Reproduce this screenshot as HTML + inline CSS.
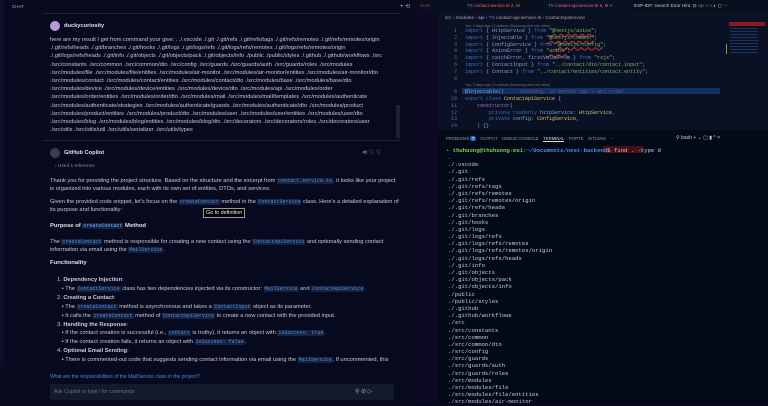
<!DOCTYPE html>
<html><head><meta charset="utf-8"><style>
*{margin:0;padding:0;box-sizing:border-box}
body{width:768px;height:404px;overflow:hidden;background:#070a1e;font-family:"Liberation Sans",sans-serif;position:relative}
.a{position:absolute}
.chat{left:0;top:0;width:414px;height:404px;background:#070a1e}
.strip{left:0;top:0;width:4px;height:404px;background:#0b0f2a}
.t{font-size:5.7px;color:#c9cbd6;white-space:nowrap}
.c{font-family:"Liberation Mono",monospace;color:#4d8fe0;background:#17223f;padding:0 1px;font-size:5px}
.m{font-family:"Liberation Mono",monospace;white-space:pre;font-size:5.6px}
.term div{height:7.2px;line-height:7.2px}
</style></head><body>
<div class="a chat"></div><div class="a strip"></div>
<div class="a t" style="left:12px;top:4px;color:#aaa;font-size:4.5px">CHAT</div>
<div class="a" style="left:42px;top:13px;width:358px;height:1px;background:#1b2138"></div>
<div class="a" style="left:50px;top:21px;width:10px;height:10px;border-radius:50%;background:#b89bd0"></div>
<div class="a t" style="left:64px;top:23px;font-weight:bold;color:#e0e0e8">duckycuriosity</div>
<div class="a t" style="left:50px;top:36px;line-height:8.2px;color:#c4c6d2">here are my result I get from command your give: . ./.vscode ./.git ./.git/refs ./.git/refs/tags ./.git/refs/remotes ./.git/refs/remotes/origin<br>./.git/refs/heads ./.git/branches ./.git/hooks ./.git/logs ./.git/logs/refs ./.git/logs/refs/remotes ./.git/logs/refs/remotes/origin<br>./.git/logs/refs/heads ./.git/info ./.git/objects ./.git/objects/pack ./.git/objects/info ./public ./public/styles ./.github ./.github/workflows ./src<br>./src/constants ./src/common ./src/common/dto ./src/config ./src/guards ./src/guards/auth ./src/guards/roles ./src/modules<br>./src/modules/file ./src/modules/file/entities ./src/modules/air-monitor ./src/modules/air-monitor/entities ./src/modules/air-monitor/dto<br>./src/modules/contact ./src/modules/contact/entities ./src/modules/contact/dto ./src/modules/base ./src/modules/base/dto<br>./src/modules/device ./src/modules/device/entities ./src/modules/device/dto ./src/modules/api ./src/modules/order<br>./src/modules/order/entities ./src/modules/order/dto ./src/modules/mail ./src/modules/mail/templates ./src/modules/authenticate<br>./src/modules/authenticate/strategies ./src/modules/authenticate/guards ./src/modules/authenticate/dto ./src/modules/product<br>./src/modules/product/entities ./src/modules/product/dto ./src/modules/user ./src/modules/user/entities ./src/modules/user/dto<br>./src/modules/blog ./src/modules/blog/entities ./src/modules/blog/dto ./src/decorators ./src/decorators/roles ./src/decorators/user<br>./src/utils ./src/utils/util ./src/utils/serializer ./src/utils/types</div>
<div class="a" style="left:42px;top:140px;width:358px;height:1px;background:#1b2138"></div>
<div class="a" style="left:50px;top:148px;width:10px;height:10px;border-radius:50%;background:#3a3d4e"></div>
<div class="a t" style="left:64px;top:150px;font-weight:bold;color:#e0e0e8">GitHub Copilot</div>
<div class="a t" style="left:362px;top:149px;color:#bbb;font-size:6px">⊲ ♡ ♡</div>
<div class="a t" style="left:55px;top:164px;color:#8a8ea0;font-size:4.8px">› Used 1 reference</div>
<div class="a t" style="left:50px;top:177px;line-height:8.3px">Thank you for providing the project structure. Based on the structure and the excerpt from <span class="c">contact.service.ts</span>, it looks like your project<br>is organized into various modules, each with its own set of entities, DTOs, and services.</div>
<div class="a t" style="left:50px;top:198px;line-height:8.3px">Given the provided code snippet, let's focus on the <span class="c">createContact</span> method in the <span class="c">ContactService</span> class. Here's a detailed explanation of<br>its purpose and functionality:</div>
<div class="a t" style="left:203px;top:208px;border:1px solid #999;background:#000;color:#eee;padding:1px 2px;font-size:5.4px">Go to definition</div>
<div class="a t" style="left:50px;top:223px;font-weight:bold;font-size:5.9px;color:#e0e0e8">Purpose of <span class="c">createContact</span> Method</div>
<div class="a t" style="left:50px;top:238px;line-height:8.3px">The <span class="c">createContact</span> method is responsible for creating a new contact using the <span class="c">ContactApiService</span> and optionally sending contact<br>information via email using the <span class="c">MailService</span>.</div>
<div class="a t" style="left:50px;top:260px;font-weight:bold;font-size:5.9px;color:#e0e0e8">Functionality</div>
<div class="a t" style="left:57px;top:276px;line-height:8.9px">1. <b>Dependency Injection</b>:<br>&nbsp;&nbsp;&nbsp;• The <span class="c">ContactService</span> class has two dependencies injected via its constructor: <span class="c">MailService</span> and <span class="c">ContactApiService</span>.<br>2. <b>Creating a Contact</b>:<br>&nbsp;&nbsp;&nbsp;• The <span class="c">createContact</span> method is asynchronous and takes a <span class="c">ContactInput</span> object as its parameter.<br>&nbsp;&nbsp;&nbsp;• It calls the <span class="c">createContact</span> method of <span class="c">ContactApiService</span> to create a new contact with the provided input.<br>3. <b>Handling the Response</b>:<br>&nbsp;&nbsp;&nbsp;• If the contact creation is successful (i.e., <span class="c">contact</span> is truthy), it returns an object with <span class="c">isSuccess: true</span>.<br>&nbsp;&nbsp;&nbsp;• If the contact creation fails, it returns an object with <span class="c">isSuccess: false</span>.<br>4. <b>Optional Email Sending</b>:<br>&nbsp;&nbsp;&nbsp;• There is commented-out code that suggests sending contact information via email using the <span class="c">MailService</span>. If uncommented, this</div>
<div class="a" style="left:0;top:367px;width:414px;height:37px;background:#070a1e"></div>
<div class="a t" style="left:50px;top:374px;color:#4a86d8;font-size:5px">What are the responsibilities of the MailService class in the project?</div>
<div class="a" style="left:50px;top:384px;width:344px;height:16px;background:#141a2e;border-radius:2px"></div>
<div class="a t" style="left:54px;top:389px;color:#6c7080;font-size:5.2px">Ask Copilot or type / for commands</div>
<div class="a t" style="left:355px;top:388px;color:#aaa;font-size:6px">⚲ ⊘ ▷</div>
<div class="a" style="left:396px;top:105px;width:4px;height:33px;background:#1c2236"></div>
<div class="a" style="left:414px;top:0;width:24px;height:404px;background:#0b0a22"></div>
<div class="a t" style="left:400px;top:3px;color:#bbb;font-size:6px">+ ⟲</div>
<!-- editor -->
<div class="a" style="left:438px;top:0;width:330px;height:130px;background:#0b1124"></div>
<div class="a" style="left:420px;top:0;width:348px;height:12px;background:#0a0f1e"></div>
<div class="a t" style="left:420px;top:3px;color:#c44;font-size:4.6px">ce.ts</div>
<div class="a t" style="left:467px;top:3px;color:#e06a6a;font-size:4.6px"><span style="color:#4a8fd8">TS</span> contact.service.ts 2, M</div>
<div class="a" style="left:544px;top:0;width:88px;height:12px;background:#0b1124"></div>
<div class="a t" style="left:548px;top:3px;color:#e06a6a;font-size:4.6px"><span style="color:#4a8fd8">TS</span> contact-api.service.ts 5, M ×</div>
<div class="a t" style="left:634px;top:3px;color:#ccc;font-size:4.6px">ESP-IDF: Search Error Hint &nbsp;⊡ ◁○ ○ ○ ◐ ▢ ···</div>
<div class="a t" style="left:445px;top:16px;color:#aaa;font-size:4.8px">src › modules › api › <span style="color:#4a8fd8">TS</span> contact-api.service.ts › ContactApiService</div>
<div class="a t" style="left:465px;top:24px;color:#777;font-size:3.6px">You, 2 days ago | 2 authors (thuhuong and one other)</div>
<div class="a m" style="left:448px;top:28px;line-height:6.8px;color:#5b6a8a;font-size:5px">  1<br>  2<br>  3<br>  4<br>  5<br>  6<br>  7<br>  8<br><br>  9<br> 10<br> 11<br> 12<br> 13<br> 14</div>
<div class="a" style="left:462px;top:88px;width:258px;height:6px;background:#163060"></div>
<div class="a m" style="left:465px;top:28px;line-height:6.8px;color:#7fa6d6;font-size:5px"><span style="color:#3d6fc4">import</span> { HttpService } <span style="color:#3d6fc4">from</span> <span style="color:#7bb56b;text-decoration:underline wavy #c33">"@nestjs/axios"</span>;
<span style="color:#3d6fc4">import</span> { Injectable } <span style="color:#3d6fc4">from</span> <span style="color:#7bb56b;text-decoration:underline wavy #c33">"@nestjs/common"</span>;
<span style="color:#3d6fc4">import</span> { ConfigService } <span style="color:#3d6fc4">from</span> <span style="color:#7bb56b;text-decoration:underline wavy #c33">"@nestjs/config"</span>;
<span style="color:#3d6fc4">import</span> { AxiosError } <span style="color:#3d6fc4">from</span> <span style="color:#7bb56b;text-decoration:underline wavy #c33">"axios"</span>;
<span style="color:#3d6fc4">import</span> { catchError, firstValueFrom } <span style="color:#3d6fc4">from</span> <span style="color:#7bb56b">"rxjs"</span>;
<span style="color:#3d6fc4">import</span> { ContactInput } <span style="color:#3d6fc4">from</span> <span style="color:#7bb56b">"../contact/dto/contact.input"</span>;
<span style="color:#3d6fc4">import</span> { Contact } <span style="color:#3d6fc4">from</span> <span style="color:#7bb56b">"../contact/entities/contact.entity"</span>;

<span style="font-size:3.6px;color:#777;font-family:'Liberation Sans'">You, 2 days ago | 2 authors (thuhuong and one other)</span>
@Injectable()     <span style="color:#555c70">thuhuong, 10 months ago • api_order</span>
<span style="color:#3d6fc4">export class</span> <span style="color:#d8c070">ContactApiService</span> {
    <span style="color:#b070c0">constructor</span>(
        <span style="color:#3d6fc4">private readonly</span> httpService: <span style="color:#d8c070">HttpService</span>,
        <span style="color:#3d6fc4">private</span> config: <span style="color:#d8c070">ConfigService</span>,
    ) {}</div>
<div class="a" style="left:729px;top:22px;width:36px;height:4px;background:#8a1a20"></div>
<div class="a" style="left:730px;top:28px;width:28px;height:25px;background:repeating-linear-gradient(#1c3360 0 1px,transparent 1px 3px)"></div>
<div class="a" style="left:726px;top:44px;width:1px;height:10px;background:#7a3"></div>
<!-- terminal -->
<div class="a" style="left:438px;top:130px;width:330px;height:274px;background:#020a18"></div>
<div class="a t" style="left:446px;top:136px;color:#999;font-size:4.2px">PROBLEMS <span style="background:#2a6ed0;color:#fff;border-radius:3px;padding:0 1.5px">7</span> &nbsp;&nbsp; OUTPUT &nbsp;&nbsp; DEBUG CONSOLE &nbsp;&nbsp; <span style="color:#ddd;border-bottom:1px solid #ddd">TERMINAL</span> &nbsp;&nbsp; PORTS &nbsp;&nbsp; GITLENS &nbsp; ···</div>
<div class="a t" style="left:676px;top:135px;color:#ccc;font-size:5px">⚲ bash + ⌄ ▢ ▮ ^ ×</div>
<div class="a" style="left:603px;top:146px;width:40px;height:7px;background:#4a0e14"></div>
<div class="a m term" style="left:446px;top:147px;color:#c8ccd4;font-size:5.6px"><div><span style="color:#3a8ed8">•</span> <span style="color:#7ad05a;font-weight:bold">thuhuong@thuhuong-msi</span>:<span style="color:#4a8fe8;font-weight:bold">~/Documents/nest-backend</span>$ find . -type d</div></div>
<div class="a m term" style="left:448px;top:154px;color:#c8ccd4;font-size:5.6px"><div>.</div><div>./.vscode</div><div>./.git</div><div>./.git/refs</div><div>./.git/refs/tags</div><div>./.git/refs/remotes</div><div>./.git/refs/remotes/origin</div><div>./.git/refs/heads</div><div>./.git/branches</div><div>./.git/hooks</div><div>./.git/logs</div><div>./.git/logs/refs</div><div>./.git/logs/refs/remotes</div><div>./.git/logs/refs/remotes/origin</div><div>./.git/logs/refs/heads</div><div>./.git/info</div><div>./.git/objects</div><div>./.git/objects/pack</div><div>./.git/objects/info</div><div>./public</div><div>./public/styles</div><div>./.github</div><div>./.github/workflows</div><div>./src</div><div>./src/constants</div><div>./src/common</div><div>./src/common/dto</div><div>./src/config</div><div>./src/guards</div><div>./src/guards/auth</div><div>./src/guards/roles</div><div>./src/modules</div><div>./src/modules/file</div><div>./src/modules/file/entities</div><div>./src/modules/air-monitor</div></div>
</body></html>
